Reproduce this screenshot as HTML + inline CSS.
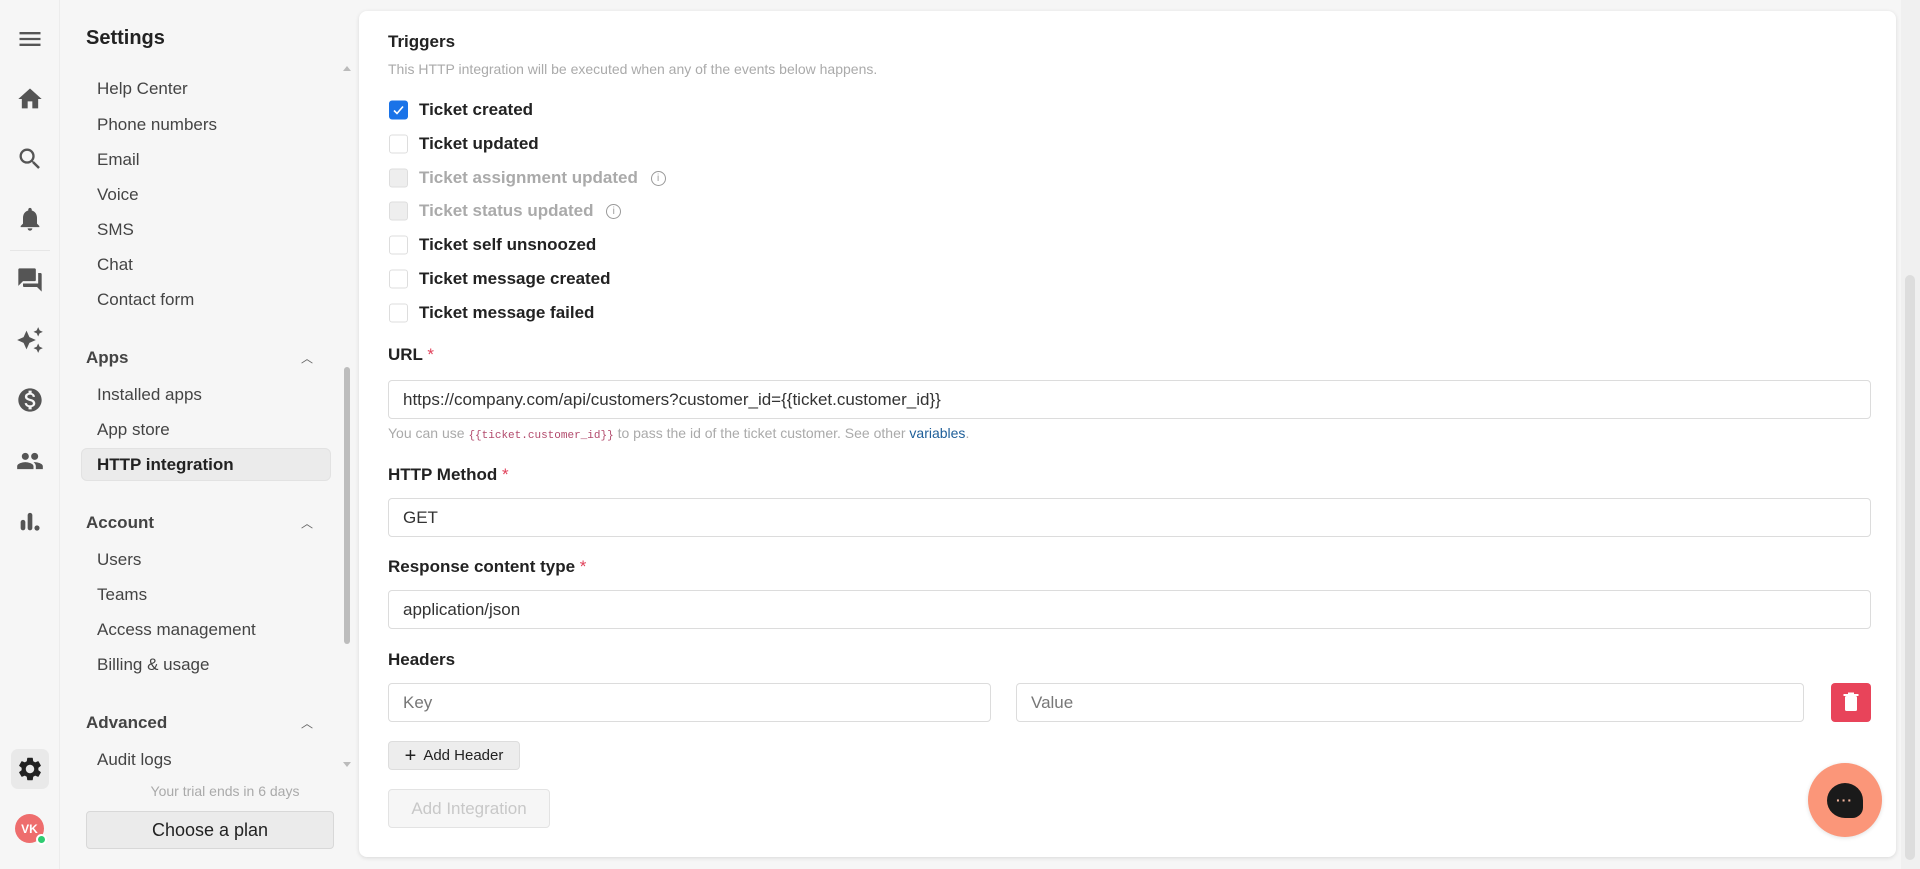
<!DOCTYPE html>
<html><head><meta charset="utf-8"><style>
*{box-sizing:border-box;margin:0;padding:0}
body{width:1920px;height:869px;background:#f6f6f6;font-family:"Liberation Sans",sans-serif;position:relative;overflow:hidden;color:#222}
.a{position:absolute}
.rail{left:0;top:0;width:60px;height:869px;background:#f6f6f6;border-right:1px solid #ececec}
.ic{position:absolute;left:16px;width:28px;height:28px;fill:#555}
.side{left:61px;top:0;width:292px;height:869px;background:#f6f6f6}
.it{position:absolute;left:36px;font-size:17px;color:#444;transform:translateY(-50%);white-space:nowrap}
.sec{position:absolute;left:25px;font-size:17px;font-weight:bold;color:#444;transform:translateY(-50%)}
.car{position:absolute;left:240px;font-size:12px;color:#666;transform:translateY(-50%)}
.card{left:359px;top:11px;width:1537px;height:846px;background:#fff;border-radius:8px;box-shadow:0 1px 4px rgba(0,0,0,.12)}
.lbl{position:absolute;left:29px;font-size:17px;font-weight:bold;color:#222;transform:translateY(-50%);white-space:nowrap}
.lbl b{color:#e0415a;font-weight:normal}
.cb{position:absolute;left:30px;width:19px;height:19px;border:1px solid #ddd;border-radius:3px;background:#fff;transform:translateY(-50%)}
.cl{position:absolute;left:60px;font-size:17px;font-weight:bold;color:#222;transform:translateY(-50%);white-space:nowrap}
.dis{color:#aaa}
.inp{position:absolute;border:1px solid #dcdcdc;border-radius:4px;background:#fff;font-size:17px;color:#333;padding-left:14px;display:flex;align-items:center}
</style></head><body>
<div class="a rail">
<svg class="ic" style="top:25px" viewBox="0 0 24 24"><path d="M3 18h18v-2H3v2zm0-5h18v-2H3v2zm0-7v2h18V6H3z"/></svg>
<svg class="ic" style="top:85px" viewBox="0 0 24 24"><path d="M10 20v-6h4v6h5v-8h3L12 3 2 12h3v8z"/></svg>
<svg class="ic" style="top:145px" viewBox="0 0 24 24"><path d="M15.5 14h-.79l-.28-.27A6.47 6.47 0 0 0 16 9.5 6.5 6.5 0 1 0 9.5 16c1.61 0 3.09-.59 4.23-1.57l.27.28v.79l5 4.99L20.49 19l-4.99-5zm-6 0C7.01 14 5 11.99 5 9.5S7.01 5 9.5 5 14 7.01 14 9.5 11.99 14 9.5 14z"/></svg>
<svg class="ic" style="top:205px" viewBox="0 0 24 24"><path d="M12 22c1.1 0 2-.9 2-2h-4c0 1.1.89 2 2 2zm6-6v-5c0-3.07-1.64-5.64-4.5-6.32V4c0-.83-.67-1.5-1.5-1.5s-1.5.67-1.5 1.5v.68C7.63 5.36 6 7.92 6 11v5l-2 2v1h16v-1l-2-2z"/></svg>
<div class="a" style="left:10px;top:250px;width:40px;border-top:1px solid #e6e6e6"></div>
<svg class="ic" style="top:266px" viewBox="0 0 24 24"><path d="M21 6h-2v9H6v2c0 .55.45 1 1 1h11l4 4V7c0-.55-.45-1-1-1zm-4 6V3c0-.55-.45-1-1-1H3c-.55 0-1 .45-1 1v14l4-4h10c.55 0 1-.45 1-1z"/></svg>
<svg class="ic" style="top:326px" viewBox="0 0 24 24"><path d="M19 9l1.25-2.75L23 5l-2.75-1.25L19 1l-1.25 2.75L15 5l2.75 1.25zm0 6l-1.25 2.75L15 19l2.75 1.25L19 23l1.25-2.75L23 19l-2.75-1.25zM11.5 9.5L9 4 6.5 9.5 1 12l5.5 2.5L9 20l2.5-5.5L17 12z"/></svg>
<svg class="ic" style="top:386px" viewBox="0 0 24 24"><path d="M12 2C6.48 2 2 6.48 2 12s4.48 10 10 10 10-4.48 10-10S17.52 2 12 2zm1.41 16.09V20h-2.67v-1.93c-1.71-.36-3.16-1.46-3.27-3.4h1.96c.1 1.05.82 1.87 2.65 1.87 1.96 0 2.4-.98 2.4-1.59 0-.83-.44-1.61-2.67-2.14-2.48-.6-4.18-1.62-4.18-3.67 0-1.72 1.39-2.84 3.11-3.21V4h2.67v1.95c1.86.45 2.79 1.86 2.85 3.39H14.3c-.05-1.11-.64-1.87-2.22-1.87-1.5 0-2.4.68-2.4 1.64 0 .84.65 1.39 2.67 1.91s4.18 1.39 4.18 3.91c-.01 1.83-1.38 2.83-3.12 3.16z"/></svg>
<svg class="ic" style="top:447px" viewBox="0 0 24 24"><path d="M16 11c1.66 0 2.99-1.34 2.99-3S17.66 5 16 5c-1.66 0-3 1.34-3 3s1.34 3 3 3zm-8 0c1.66 0 2.99-1.34 2.99-3S9.66 5 8 5C6.34 5 5 6.34 5 8s1.34 3 3 3zm0 2c-2.33 0-7 1.17-7 3.5V19h14v-2.5c0-2.33-4.67-3.5-7-3.5zm8 0c-.29 0-.62.02-.97.05 1.16.84 1.97 1.97 1.97 3.45V19h6v-2.5c0-2.33-4.67-3.5-7-3.5z"/></svg>
<svg class="ic" style="top:507px" viewBox="0 0 24 24"><rect x="4" y="11" width="4" height="9" rx="2"/><rect x="10" y="5" width="4" height="15" rx="2"/><circle cx="18" cy="18" r="2.2"/></svg>
<div class="a" style="left:11px;top:749px;width:38px;height:40px;background:#e9e9e9;border-radius:7px"></div>
<svg class="ic" style="top:755px;fill:#222" viewBox="0 0 24 24"><path d="M19.14 12.94c.04-.3.06-.61.06-.94 0-.32-.02-.64-.07-.94l2.03-1.58a.49.49 0 0 0 .12-.61l-1.92-3.32a.49.49 0 0 0-.59-.22l-2.39.96c-.5-.38-1.03-.7-1.62-.94l-.36-2.54a.48.48 0 0 0-.48-.41h-3.84c-.24 0-.43.17-.47.41l-.36 2.54c-.59.24-1.13.57-1.62.94l-2.39-.96a.48.48 0 0 0-.59.22L2.74 8.87c-.12.21-.08.47.12.61l2.03 1.58c-.05.3-.09.63-.09.94s.02.64.07.94l-2.03 1.58a.49.49 0 0 0-.12.61l1.92 3.32c.12.22.37.29.59.22l2.39-.96c.5.38 1.03.7 1.62.94l.36 2.54c.05.24.24.41.48.41h3.84c.24 0 .44-.17.47-.41l.36-2.54c.59-.24 1.13-.56 1.62-.94l2.39.96c.22.08.47 0 .59-.22l1.92-3.32c.12-.22.07-.47-.12-.61l-2.01-1.58zM12 15.6c-1.98 0-3.6-1.62-3.6-3.6s1.62-3.6 3.6-3.6 3.6 1.62 3.6 3.6-1.62 3.6-3.6 3.6z"/></svg>
<div class="a" style="left:15px;top:814px;width:29px;height:29px;border-radius:50%;background:#ee6d6d;color:#fff;font-size:12px;font-weight:bold;display:flex;align-items:center;justify-content:center">VK</div>
<div class="a" style="left:36px;top:834px;width:11px;height:11px;border-radius:50%;background:#2ecc71;border:2px solid #fff"></div>
</div>
<div class="a side">
<div class="a" style="left:25px;top:27px;font-size:20px;font-weight:bold;color:#222">Settings</div>
<div class="a" style="left:282px;top:62px;border:4px solid transparent;border-bottom:5px solid #bbb"></div>
<div class="a" style="left:282px;top:762px;border:4px solid transparent;border-top:5px solid #bbb"></div>
<div class="a" style="left:283px;top:367px;width:6px;height:277px;background:#bdbdbd;border-radius:3px"></div>
<div class="it" style="top:89px">Help Center</div>
<div class="it" style="top:125px">Phone numbers</div>
<div class="it" style="top:160px">Email</div>
<div class="it" style="top:195px">Voice</div>
<div class="it" style="top:230px">SMS</div>
<div class="it" style="top:265px">Chat</div>
<div class="it" style="top:300px">Contact form</div>
<div class="sec" style="top:358px">Apps</div><div class="car" style="top:358px">︿</div>
<div class="it" style="top:395px">Installed apps</div>
<div class="it" style="top:430px">App store</div>
<div class="a" style="left:20px;top:448px;width:250px;height:33px;background:#ebebeb;border-radius:6px;border:1px solid #e2e2e2"></div>
<div class="it" style="top:465px;font-weight:bold;color:#222">HTTP integration</div>
<div class="sec" style="top:523px">Account</div><div class="car" style="top:523px">︿</div>
<div class="it" style="top:560px">Users</div>
<div class="it" style="top:595px">Teams</div>
<div class="it" style="top:630px">Access management</div>
<div class="it" style="top:665px">Billing &amp; usage</div>
<div class="sec" style="top:723px">Advanced</div><div class="car" style="top:723px">︿</div>
<div class="it" style="top:760px">Audit logs</div>
<div class="a" style="left:64px;top:783px;width:200px;text-align:center;font-size:14px;color:#aaa">Your trial ends in 6 days</div>
<div class="a" style="left:25px;top:811px;width:248px;height:38px;background:#ebebeb;border:1px solid #d8d8d8;border-radius:4px;font-size:18px;color:#222;display:flex;align-items:center;justify-content:center">Choose a plan</div>
</div>
<div class="a" style="left:1901px;top:0;width:19px;height:869px;background:#f0f0f0"></div>
<div class="a" style="left:1905px;top:275px;width:10px;height:585px;background:#ddd;border-radius:5px"></div>
<div class="a card">
<div class="lbl" style="top:31px">Triggers</div>
<div class="a" style="left:29px;top:50px;font-size:14px;color:#aaa">This HTTP integration will be executed when any of the events below happens.</div>
<div class="cb" style="top:99px;background:#1a73e8;border-color:#1a73e8"><svg width="17" height="17" viewBox="0 0 17 17" style="position:absolute;left:0;top:0"><path d="M4 9l3 3 6-7" stroke="#fff" stroke-width="1.6" fill="none"/></svg></div>
<div class="cl" style="top:99px">Ticket created</div>
<div class="cb" style="top:133px"></div><div class="cl" style="top:133px">Ticket updated</div>
<div class="cb" style="top:167px;background:#eee"></div><div class="cl dis" style="top:167px">Ticket assignment updated <span style="font-weight:normal;font-size:14px;border:1.3px solid #999;border-radius:50%;display:inline-block;width:15px;height:15px;text-align:center;line-height:13px;color:#999;font-size:10px;margin-left:8px;vertical-align:2px">i</span></div>
<div class="cb" style="top:200px;background:#eee"></div><div class="cl dis" style="top:200px">Ticket status updated <span style="font-weight:normal;border:1.3px solid #999;border-radius:50%;display:inline-block;width:15px;height:15px;text-align:center;line-height:13px;color:#999;font-size:10px;margin-left:8px;vertical-align:2px">i</span></div>
<div class="cb" style="top:234px"></div><div class="cl" style="top:234px">Ticket self unsnoozed</div>
<div class="cb" style="top:268px"></div><div class="cl" style="top:268px">Ticket message created</div>
<div class="cb" style="top:302px"></div><div class="cl" style="top:302px">Ticket message failed</div>
<div class="lbl" style="top:344px">URL <b>*</b></div>
<div class="inp" style="left:29px;top:369px;width:1483px;height:39px">https://company.com/api/customers?customer_id={{ticket.customer_id}}</div>
<div class="a" style="left:29px;top:414px;font-size:14px;color:#aaa;white-space:nowrap">You can use <span style="font-family:'Liberation Mono',monospace;font-size:11px;color:#b24a6c">{{ticket.customer_id}}</span> to pass the id of the ticket customer. See other <span style="color:#1f5f99">variables</span>.</div>
<div class="lbl" style="top:464px">HTTP Method <b>*</b></div>
<div class="inp" style="left:29px;top:487px;width:1483px;height:39px">GET</div>
<div class="lbl" style="top:556px">Response content type <b>*</b></div>
<div class="inp" style="left:29px;top:579px;width:1483px;height:39px">application/json</div>
<div class="lbl" style="top:649px">Headers</div>
<div class="inp" style="left:29px;top:672px;width:603px;height:39px;color:#777">Key</div>
<div class="inp" style="left:657px;top:672px;width:788px;height:39px;color:#777">Value</div>
<div class="a" style="left:1472px;top:672px;width:40px;height:39px;background:#e8445a;border-radius:4px"><svg width="40" height="39" viewBox="0 0 40 39"><rect x="14" y="13" width="12" height="15" rx="1.5" fill="#fff"/><rect x="12.5" y="11" width="15" height="2" fill="#fff"/><rect x="17" y="9.5" width="6" height="2" fill="#fff"/></svg></div>
<div class="a" style="left:29px;top:730px;width:132px;height:29px;background:#ededed;border:1px solid #ddd;border-radius:4px;font-size:15px;color:#222;display:flex;align-items:center;justify-content:center"><span style="font-size:20px;margin-right:7px;line-height:1">+</span>Add Header</div>
<div class="a" style="left:29px;top:778px;width:162px;height:39px;background:#f6f6f6;border:1px solid #e3e3e3;border-radius:4px;font-size:17px;color:#c8c8c8;display:flex;align-items:center;justify-content:center">Add Integration</div>
<div class="a" style="left:1449px;top:752px;width:74px;height:74px;border-radius:50%;background:#fb9679;box-shadow:0 1px 4px rgba(0,0,0,.12)"></div>
<div class="a" style="left:1468px;top:772px;width:36px;height:35px;border-radius:50% 50% 30% 50%;background:#1a1a1a"></div>
<div class="a" style="left:1477px;top:781px;color:#f3b49c;font-size:14px;font-weight:bold;letter-spacing:1px">···</div>
</div>
</body></html>
